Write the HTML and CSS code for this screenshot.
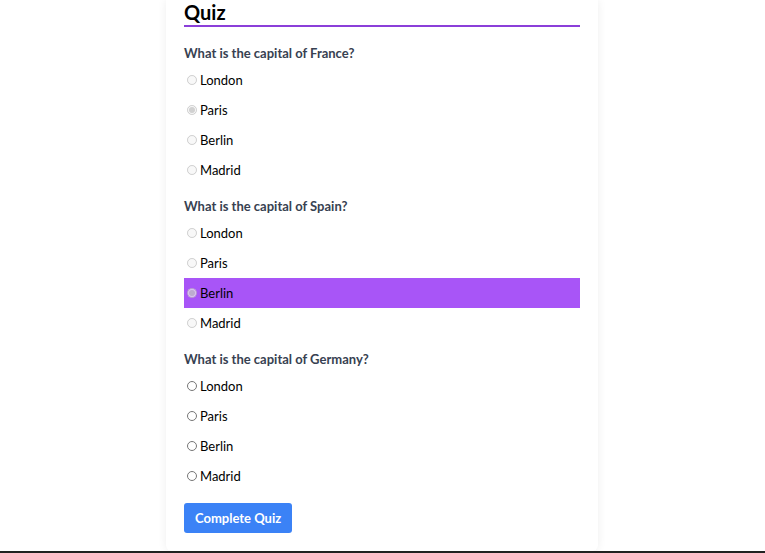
FILE: index.html
```html
<!DOCTYPE html>
<html lang="en">
<head>
<meta charset="utf-8">
<title>Quiz</title>
<link rel="stylesheet" href="styles.css">
</head>
<body>
<div class="page">
  <main class="card">
    <h1 class="title">Quiz</h1>

    <section class="question">
      <p class="prompt">What is the capital of France?</p>
      <label class="option"><input type="radio" name="q1" disabled><span>London</span></label>
      <label class="option"><input type="radio" name="q1" checked disabled><span>Paris</span></label>
      <label class="option"><input type="radio" name="q1" disabled><span>Berlin</span></label>
      <label class="option"><input type="radio" name="q1" disabled><span>Madrid</span></label>
    </section>

    <section class="question">
      <p class="prompt">What is the capital of Spain?</p>
      <label class="option"><input type="radio" name="q2" disabled><span>London</span></label>
      <label class="option"><input type="radio" name="q2" disabled><span>Paris</span></label>
      <label class="option option-selected"><input type="radio" name="q2" checked disabled><span>Berlin</span></label>
      <label class="option"><input type="radio" name="q2" disabled><span>Madrid</span></label>
    </section>

    <section class="question">
      <p class="prompt">What is the capital of Germany?</p>
      <label class="option"><input type="radio" name="q3"><span>London</span></label>
      <label class="option"><input type="radio" name="q3"><span>Paris</span></label>
      <label class="option"><input type="radio" name="q3"><span>Berlin</span></label>
      <label class="option"><input type="radio" name="q3"><span>Madrid</span></label>
    </section>

    <button class="submit" type="button">Complete Quiz</button>
  </main>
</div>
<div class="bottom-rule"></div>
</body>
</html>
```

FILE: styles.css
```css
html, body {
  margin: 0;
  padding: 0;
  background: #ffffff;
}

body {
  font-family: "Lato", "Open Sans", sans-serif;
  color: #000000;
  height: 553px;
  display: flex;
  flex-direction: column;
  overflow: hidden;
}

.page {
  flex: 1;
  display: flex;
  justify-content: center;
  padding-right: 1px;
}

.card {
  box-sizing: border-box;
  width: 432px;
  height: 551px;
  background: #ffffff;
  border-radius: 0 0 6px 6px;
  box-shadow: 0 0 10px rgba(0, 0, 0, 0.07);
  padding: 0 18px 18px;
  display: flex;
  flex-direction: column;
}

.title {
  margin: 0;
  font-size: 20px;
  line-height: 25px;
  font-weight: 700;
  border-bottom: 2px solid #8b3fd9;
  color: #000;
}

.question {
  display: flex;
  flex-direction: column;
  margin-top: 9px;
}

.title + .question {
  margin-top: 14px;
}

.prompt {
  margin: 0;
  font-size: 13px;
  line-height: 24px;
  font-weight: 700;
  color: #374151;
}

.option {
  display: flex;
  align-items: center;
  height: 30px;
  font-size: 13px;
  color: #000;
}

.option input {
  margin: 0 3px 0 3px;
  width: 10px;
  height: 10px;
}

.option-selected {
  background: #a855f7;
}

.submit {
  align-self: flex-start;
  margin-top: 12px;
  height: 30px;
  padding: 0 11px;
  border: none;
  border-radius: 3px;
  background: #3b82f6;
  color: #ffffff;
  font-family: "Lato", "Open Sans", sans-serif;
  font-size: 13px;
  font-weight: 700;
}

.bottom-rule {
  height: 2px;
  background: #222222;
}
```
